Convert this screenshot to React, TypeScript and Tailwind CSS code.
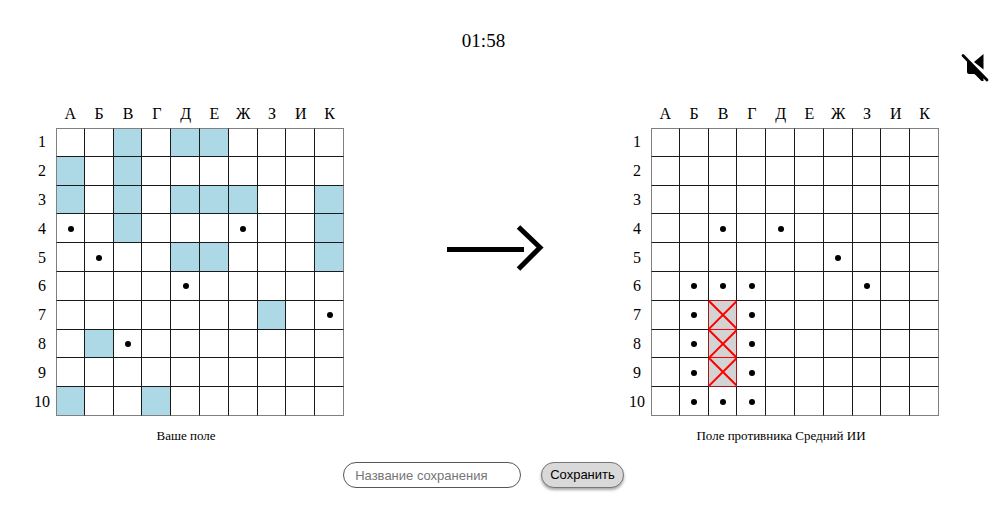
import { useState } from "react";

const LETTERS = ["А", "Б", "В", "Г", "Д", "Е", "Ж", "З", "И", "К"];

type Kind = "empty" | "ship" | "miss" | "sunk";

const OWN: string[] = [
  "..#.##....",
  "#.#.......",
  "#.#.###..#",
  "o.#...o..#",
  ".o..##...#",
  "....o.....",
  ".......#.o",
  ".#o.......",
  "..........",
  "#..#......",
];

const ENEMY: string[] = [
  "..........",
  "..........",
  "..........",
  "..o.o.....",
  "......o...",
  ".ooo...o..",
  ".oxo......",
  ".oxo......",
  ".oxo......",
  ".ooo......",
];

const KINDS: Record<string, Kind> = { ".": "empty", "#": "ship", o: "miss", x: "sunk" };

const STYLES: Record<Kind, string> = {
  empty: "bg-white",
  ship: "bg-[#add8e6]",
  miss: "bg-white pt-px pl-px",
  sunk: "bg-[#d3d3d3]",
};

type CellProps = { kind: Kind; row: number; col: number; belowSunk: boolean; rightSunk: boolean };

function Cell({ kind, row, col, belowSunk, rightSunk }: CellProps) {
  const sunk = kind === "sunk";
  const right = sunk || rightSunk ? "border-r-[#a01818]" : col === 9 ? "border-r-[#808080]" : "border-r-[#1a1a1a]";
  const bottom =
    sunk && belowSunk
      ? "border-b-[#ff0000]"
      : sunk || belowSunk
        ? "border-b-[#a01818]"
        : row === 9
          ? "border-b-[#808080]"
          : "border-b-[#1a1a1a]";
  const left = col === 0 ? "border-l border-l-[#808080]" : "";
  const top = row === 0 ? "border-t border-t-[#808080]" : "";
  return (
    <button
      type="button"
      aria-label={`${LETTERS[col]}${row + 1}`}
      className={`flex items-center justify-center border-r border-b ${right} ${bottom} ${left} ${top} ${STYLES[kind]}`}
    >
      {kind === "miss" && <span className="size-1.5 rounded-full bg-black" />}
      {sunk && (
        <svg viewBox="0 0 28 28" className="size-full" stroke="#ff0000" strokeWidth="2" aria-hidden="true">
          <path d="M0 0L28 28M28 0L0 28" />
        </svg>
      )}
    </button>
  );
}

function Board({ rows, caption }: { rows: string[]; caption: string }) {
  return (
    <section className="flex flex-col">
      <div className="grid grid-cols-[28px_288px] grid-rows-[28px_288px]">
        <div className="col-start-2 grid grid-cols-10 items-center text-center">
          {LETTERS.map((letter) => (
            <span key={letter}>{letter}</span>
          ))}
        </div>
        <div className="col-start-1 grid grid-rows-10 items-center text-center">
          {rows.map((_, i) => (
            <span key={i}>{i + 1}</span>
          ))}
        </div>
        <div className="grid grid-cols-10 grid-rows-10">
          {rows.map((line, row) =>
            line.split("").map((mark, col) => (
              <Cell
                key={`${row}-${col}`}
                kind={KINDS[mark]}
                row={row}
                col={col}
                belowSunk={rows[row + 1]?.[col] === "x"}
                rightSunk={line[col + 1] === "x"}
              />
            )),
          )}
        </div>
      </div>
      <p className="mt-2.5 text-center text-[13px] leading-5">{caption}</p>
    </section>
  );
}

export default function App() {
  const [name, setName] = useState("");
  return (
    <div className="flex min-h-screen bg-white font-['Liberation_Serif',serif] text-base text-black">
      <main className="flex flex-1 flex-col">
        <div className="pt-[29px] pb-[47px] text-center text-[19px] leading-6">01:58</div>
        <div className="flex items-start justify-between px-7">
          <Board rows={OWN} caption="Ваше поле" />
          <svg viewBox="0 0 120 96" className="mt-25 h-24 w-30" fill="none" stroke="#000" strokeWidth="5" aria-hidden="true">
            <path d="M23 49.5H100M94.500 27L116 47.500L94.500 69" />
          </svg>
          <Board rows={ENEMY} caption="Поле противника Средний ИИ" />
        </div>
        <form
          className="mt-4 flex items-center justify-center gap-5 font-['Liberation_Sans',sans-serif] text-[13px]"
          onSubmit={(e) => e.preventDefault()}
        >
          <input
            type="text"
            aria-label="Название сохранения"
            placeholder="Название сохранения"
            value={name}
            onChange={(e) => setName(e.target.value)}
            className="h-[26px] w-[178px] rounded-full border border-[#555] px-[11px] placeholder:text-[#757575]"
          />
          <button
            type="submit"
            className="h-[26px] rounded-full border border-[#767676] bg-[#d9d9d9] px-2 shadow-[0_2px_3px_rgba(0,0,0,0.35)]"
          >
            Сохранить
          </button>
        </form>
      </main>
      <aside className="flex w-[39px] justify-end pt-[52px] pr-[15px]">
        <button type="button" aria-label="Включить звук" className="size-8 shrink-0">
          <svg viewBox="0 0 32 32" className="size-8" aria-hidden="true">
            <path d="M24.500 2V17.500L15 10ZM8 8.500L24.500 24V29H22.500L15.500 22H10Q8 22 8 20Z" fill="#000" />
            <path d="M4 3.500L28 28" stroke="#000" strokeWidth="2.800" strokeLinecap="round" />
          </svg>
        </button>
      </aside>
    </div>
  );
}
